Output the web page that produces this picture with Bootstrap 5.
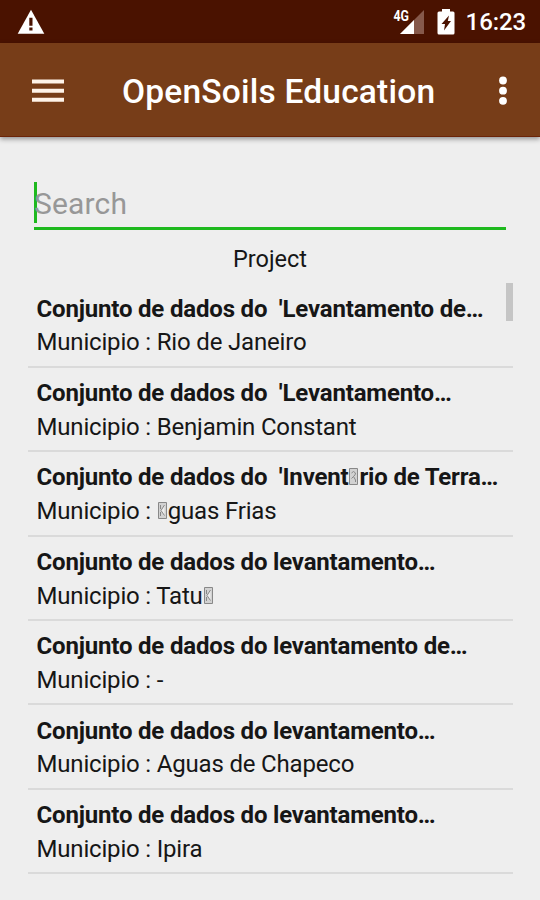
<!DOCTYPE html>
<html lang="pt">
<head>
<meta charset="utf-8">
<meta name="viewport" content="width=device-width, initial-scale=1">
<title>OpenSoils Education</title>
<link href="https://cdn.jsdelivr.net/npm/bootstrap@5.3.0/dist/css/bootstrap.min.css" rel="stylesheet">
<style>
body{font-family:Roboto,sans-serif;background:#eee;color:#161616;width:540px;height:900px;overflow:hidden}
svg{display:block;flex:none}
.statusbar{height:43px;background:#4a1200;color:#fff;padding:0 14px 0 17px}
.battery{margin-left:12px}
.clock{font-size:24px;font-weight:500;line-height:41px;letter-spacing:-.1px;margin-left:11px;padding-top:2px}
.appbar{height:94px;background:#773d18;color:#fff;padding:2px 32px 0;border-bottom:1px solid #6b2408;box-shadow:0 2px 5px rgba(0,0,0,.4)}
.apptitle{font-size:33.5px;font-weight:500;line-height:40px;letter-spacing:.2px;margin-left:58px;padding-top:2px;white-space:nowrap}
.searchbox{margin:44px 34px 0;height:49px;border-bottom:3px solid #1eb91e}
.searchbox input,.searchbox input:focus{font-size:30px;line-height:40px;color:#161616;outline:0;box-shadow:none;letter-spacing:.15px;margin-top:3px}
.searchbox input::placeholder{color:#979797;opacity:1}
.caret{width:3px;height:41px;margin-top:1px;background:#1eb91e;margin-right:-3px}
.heading{font-size:23.5px;line-height:34px;margin-top:12px}
.projects{margin:7.400px 27px 0 28px}
.project{height:84.4px;padding:9.300px 8.500px 0;border-bottom:2px solid #dadada;line-height:33.75px;font-size:24px;letter-spacing:-.18px;white-space:pre}
.project strong{font-weight:700;letter-spacing:-.18px}
.project .tofu{display:inline-block;vertical-align:baseline}
.thumb{width:7px;height:38px;background:#c5c5c5;top:0;right:0}
</style>
</head>
<body>
<header>
<div class="statusbar d-flex align-items-center">
<svg width="28" height="26" viewBox="0 0 28 26"><path fill="#fff" d="M14 .8 27.3 24.8H.7z"/><path fill="#4a1200" d="M12.3 8.7h3.2v8h-3.2zM12.3 18.6h3.2v3h-3.2z"/></svg>
<svg class="ms-auto" width="32" height="28" viewBox="0 0 32 28"><path fill="#86594b" d="M31 2v24H7z"/><path fill="#fff" d="M21 12v14H7z"/><text x="0.5" y="12.5" font-size="14" font-weight="700" fill="#fff" textLength="15.5" lengthAdjust="spacingAndGlyphs">4G</text></svg>
<svg class="battery" width="18" height="28" viewBox="0 0 18 28"><path fill="#fff" d="M5 1h8v2.500h3q1.500 0 1.500 1.500V25q0 1.500-1.500 1.500H2Q.5 26.500 .5 25V5Q.5 3.500 2 3.500h3z"/><path fill="#4a1200" d="M12 7.500l-1.200 5.500H14L7 22.500l1-6.500H4.500z"/></svg>
<span class="clock">16:23</span>
</div>
<nav class="appbar d-flex align-items-center">
<svg width="32" height="24" viewBox="0 0 32 24"><path fill="#fff3e8" d="M0 .5h32v4H0zM0 9.700h32v4H0zM0 18.700h32v4H0z"/></svg>
<div class="apptitle">OpenSoils Education</div>
<svg class="ms-auto" width="10" height="30" viewBox="0 0 10 30"><g fill="#fff"><circle cx="5" cy="4.500" r="3.900"/><circle cx="5" cy="14.700" r="3.900"/><circle cx="5" cy="24.800" r="3.900"/></g></svg>
</nav>
</header>
<main>
<div class="searchbox d-flex align-items-start"><span class="caret"></span><input class="form-control border-0 rounded-0 bg-transparent p-0" type="text" placeholder="Search" aria-label="Search"></div>
<div class="heading text-center">Project</div>
<div class="projects position-relative">
<div class="project"><strong>Conjunto de dados do  'Levantamento de…</strong>
Municipio : Rio de Janeiro</div>
<div class="project"><strong>Conjunto de dados do  'Levantamento…</strong>
Municipio : Benjamin Constant</div>
<div class="project"><strong>Conjunto de dados do  'Invent<svg class="tofu" width="11" height="17" viewBox="0 0 11 17"><path fill="#d2d2d2" stroke="#888" d="M1.500 .5h8v16h-8zM3.500 5q2-3 4 0 0 2-2 3.500l-2 2M5.500 8.500l2 3.500v2"/></svg>rio de Terra…</strong>
Municipio : <svg class="tofu" width="11" height="17" viewBox="0 0 11 17"><path fill="#d2d2d2" stroke="#888" d="M1.500 .5h8v16h-8zM3.500 3v4M7.500 3 4 8.500l3.500 5M3.500 10v4"/></svg>guas Frias</div>
<div class="project"><strong>Conjunto de dados do levantamento…</strong>
Municipio : Tatu<svg class="tofu" width="11" height="17" viewBox="0 0 11 17"><path fill="#d2d2d2" stroke="#888" d="M1.500 .5h8v16h-8zM3.500 3v4M7.500 3 4 8.500l3.500 5M3.500 10v4"/></svg></div>
<div class="project"><strong>Conjunto de dados do levantamento de…</strong>
Municipio : -</div>
<div class="project"><strong>Conjunto de dados do levantamento…</strong>
Municipio : Aguas de Chapeco</div>
<div class="project"><strong>Conjunto de dados do levantamento…</strong>
Municipio : Ipira</div>
<div class="thumb position-absolute"></div>
</div>
</main>
<script src="https://cdn.jsdelivr.net/npm/bootstrap@5.3.0/dist/js/bootstrap.bundle.min.js"></script>
</body>
</html>
